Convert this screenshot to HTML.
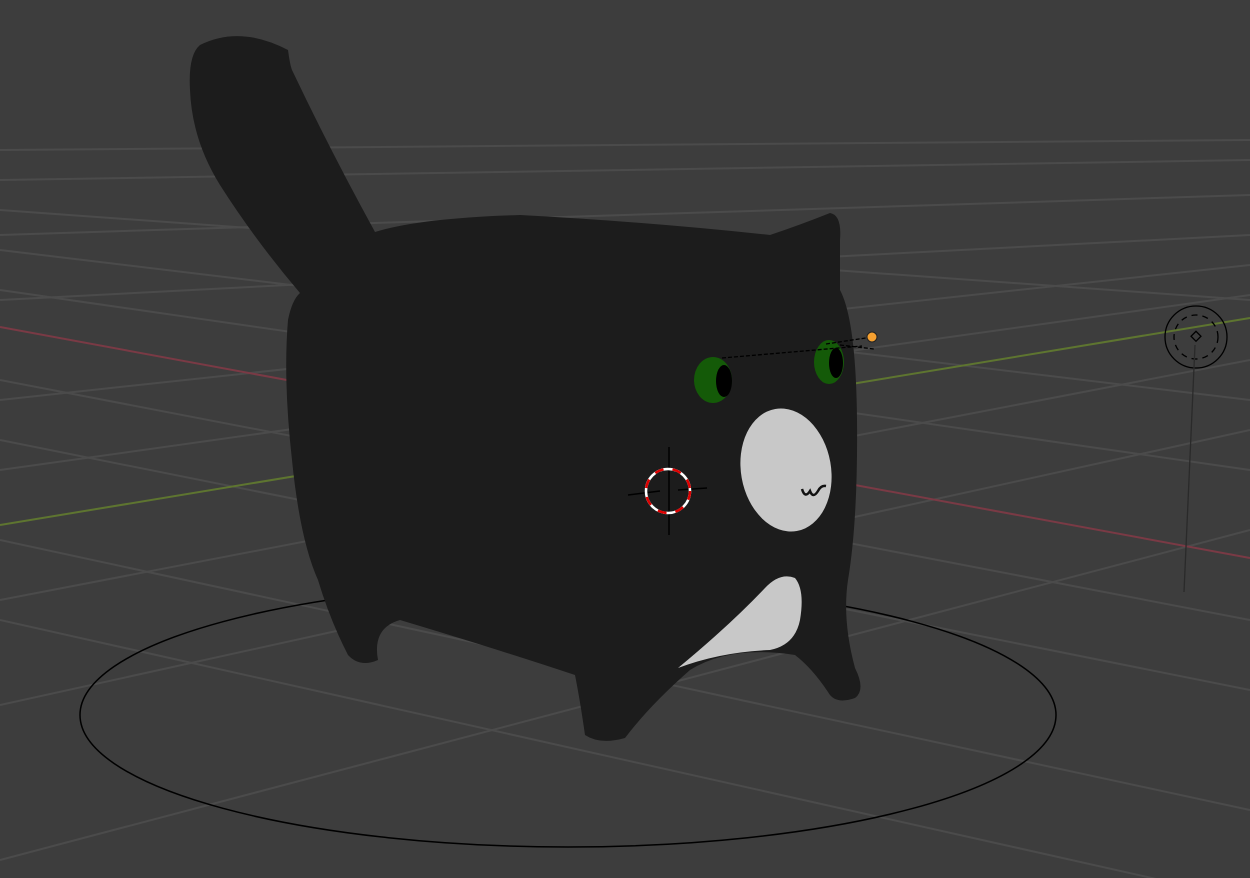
<!DOCTYPE html>
<html><head><meta charset="utf-8"><style>html,body{margin:0;padding:0;background:#3d3d3d;overflow:hidden}svg{display:block}</style></head>
<body>
<svg width="1250" height="878" viewBox="0 0 1250 878" xmlns="http://www.w3.org/2000/svg">
<rect width="1250" height="878" fill="#3d3d3d"/>
<g stroke="#4b4b4b" stroke-width="2" fill="none">
<line x1="0" y1="250" x2="1250" y2="400"/>
<line x1="0" y1="290" x2="1250" y2="470"/>
<line x1="0" y1="380" x2="1250" y2="620"/>
<line x1="0" y1="440" x2="1250" y2="690"/>
<line x1="0" y1="540" x2="1250" y2="810"/>
<line x1="0" y1="620" x2="1250" y2="900"/>
<line x1="0" y1="180" x2="1250" y2="160"/>
<line x1="0" y1="235" x2="1250" y2="195"/>
<line x1="0" y1="300" x2="1250" y2="235"/>
<line x1="0" y1="400" x2="1250" y2="265"/>
<line x1="0" y1="470" x2="1250" y2="295"/>
<line x1="0" y1="600" x2="1250" y2="360"/>
<line x1="0" y1="705" x2="1250" y2="430"/>
<line x1="0" y1="860" x2="1250" y2="530"/>
<line x1="0" y1="150" x2="1250" y2="140"/>
<line x1="0" y1="210" x2="1250" y2="300"/>
</g>
<line x1="0" y1="327" x2="1250" y2="558" stroke="#7a3a45" stroke-width="2"/>
<line x1="0" y1="525" x2="1250" y2="318" stroke="#5e7530" stroke-width="2"/>
<ellipse cx="568" cy="715" rx="488" ry="132" fill="none" stroke="#000" stroke-width="1.5"/>
<path d="M200 45 Q240 25 288 50 Q290 65 292 70 Q330 150 375 232 Q420 218 520 215 Q650 222 770 235 Q800 225 830 213 Q842 215 840 240 L840 290 Q856 320 857 420 Q858 520 848 580 Q842 620 855 668 Q866 690 855 698 Q835 705 828 692 Q812 668 795 655 Q730 645 690 670 Q650 705 625 738 Q600 745 585 735 Q580 700 575 675 Q500 650 400 620 Q372 628 378 660 Q360 668 348 655 Q330 620 318 580 Q300 540 292 460 Q283 380 288 320 Q292 300 300 293 Q255 240 220 185 Q192 140 190 90 Q188 55 200 45 Z" fill="#1c1c1c"/>
<path d="M678 668 Q720 652 770 650 Q795 645 800 620 Q805 590 795 578 Q780 572 765 588 Q730 625 678 668 Z" fill="#c8c8c8"/>
<ellipse cx="786" cy="470" rx="45" ry="62" transform="rotate(-10 786 470)" fill="#c8c8c8"/>
<path d="M802 489 q3 10 8 2 q3 8 8 0 q3 -6 8 -5" stroke="#111" stroke-width="2.5" fill="none"/>
<ellipse cx="713" cy="380" rx="19" ry="23" fill="#145a08"/>
<ellipse cx="724" cy="381" rx="8" ry="16" fill="#000"/>
<ellipse cx="829" cy="362" rx="15" ry="22" fill="#145a08"/>
<ellipse cx="836" cy="363" rx="7" ry="15" fill="#000"/>
<path d="M722 358 L862 346 M826 344 L872 337 M840 345 L874 349" stroke="#000" stroke-width="1.3" stroke-dasharray="4 2" fill="none"/>
<circle cx="872" cy="337" r="5" fill="#f5a030" stroke="#222" stroke-width="1"/>
<g stroke="#000" stroke-width="1.5">
<line x1="669" y1="447" x2="669" y2="535"/><line x1="628" y1="495" x2="660" y2="491"/><line x1="678" y1="490" x2="707" y2="488"/>
</g>
<circle cx="668" cy="491" r="22" fill="none" stroke="#fff" stroke-width="2.5"/>
<circle cx="668" cy="491" r="22" fill="none" stroke="#d00" stroke-width="2.5" stroke-dasharray="9 9"/>
<circle cx="1196" cy="337" r="31" fill="none" stroke="#000" stroke-width="1.3"/>
<circle cx="1196" cy="337" r="22" fill="none" stroke="#000" stroke-width="1.3" stroke-dasharray="6 5"/>
<rect x="1192" y="333" width="7" height="7" fill="none" stroke="#000" stroke-width="1.3" transform="rotate(45 1196 337)"/>
<line x1="1195" y1="345" x2="1184" y2="592" stroke="#2a2a2a" stroke-width="1.3"/>
</svg>
</body></html>
